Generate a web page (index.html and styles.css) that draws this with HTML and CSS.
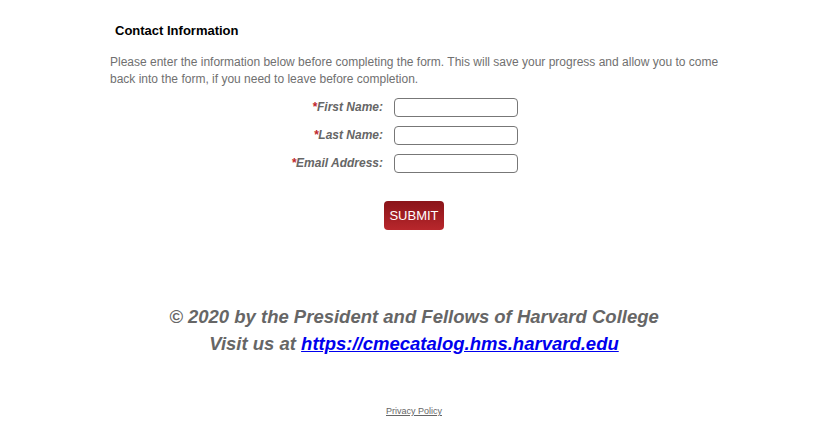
FILE: index.html
```html
<!DOCTYPE html>
<html>
<head>
<meta charset="utf-8">
<link rel="stylesheet" href="styles.css">
</head>
<body>
<div class="page">
  <h2 class="title">Contact Information</h2>
  <p class="intro">Please enter the information below before completing the form. This will save your progress and allow you to come back into the form, if you need to leave before completion.</p>
  <form class="form">
    <div class="row"><label class="label"><span class="req">*</span>First Name:</label><input class="field" type="text"></div>
    <div class="row"><label class="label"><span class="req">*</span>Last Name:</label><input class="field" type="text"></div>
    <div class="row"><label class="label"><span class="req">*</span>Email Address:</label><input class="field" type="text"></div>
    <div class="actions"><button class="submit" type="button">SUBMIT</button></div>
  </form>
</div>
<footer class="footer">
  <p class="copy">© 2020 by the President and Fellows of Harvard College</p>
  <p class="copy">Visit us at <a class="link" href="#">https://cmecatalog.hms.harvard.edu</a></p>
  <a class="privacy" href="#">Privacy Policy</a>
</footer>
</body>
</html>
```
FILE: styles.css
```css
html, body { margin: 0; padding: 0; background: #fff; }
body { font-family: "Liberation Sans", Arial, sans-serif; color: #666; }
.page { width: 618px; margin: 0 auto; padding: 23px 0 0 5px; box-sizing: border-box; }
.title { margin: 0 0 0 5px; font-size: 13px; font-weight: bold; color: #000; line-height: 16px; }
.intro { margin: 15px 0 0 0; font-size: 12px; line-height: 17px; color: #707070; }
.form { margin-top: 5px; }
.row { display: flex; align-items: center; height: 28px; }
.label { width: 273px; text-align: right; font-weight: bold; font-style: italic; font-size: 12px; color: #666; padding-right: 11px; box-sizing: content-box; }
.req { color: #c0272d; }
.field { width: 124px; height: 19px; box-sizing: border-box; border: 1px solid #777; border-radius: 4px; margin: 0; padding: 0 4px; }
.actions { padding-left: 274px; margin-top: 24px; }
.submit { width: 60px; height: 29px; border: none; border-radius: 4px; background: linear-gradient(#8a1419, #b8272c); color: #fff; font-family: "Liberation Sans", Arial, sans-serif; font-size: 13px; padding: 0; }
.footer { text-align: center; margin-top: 73px; }
.copy { margin: 0; font-size: 18.5px; line-height: 27px; font-weight: bold; font-style: italic; color: #666; }
.link { color: #0000ee; text-decoration: underline; }
.privacy { display: inline-block; margin-top: 49px; font-size: 9px; color: #666; text-decoration: underline; }
```
